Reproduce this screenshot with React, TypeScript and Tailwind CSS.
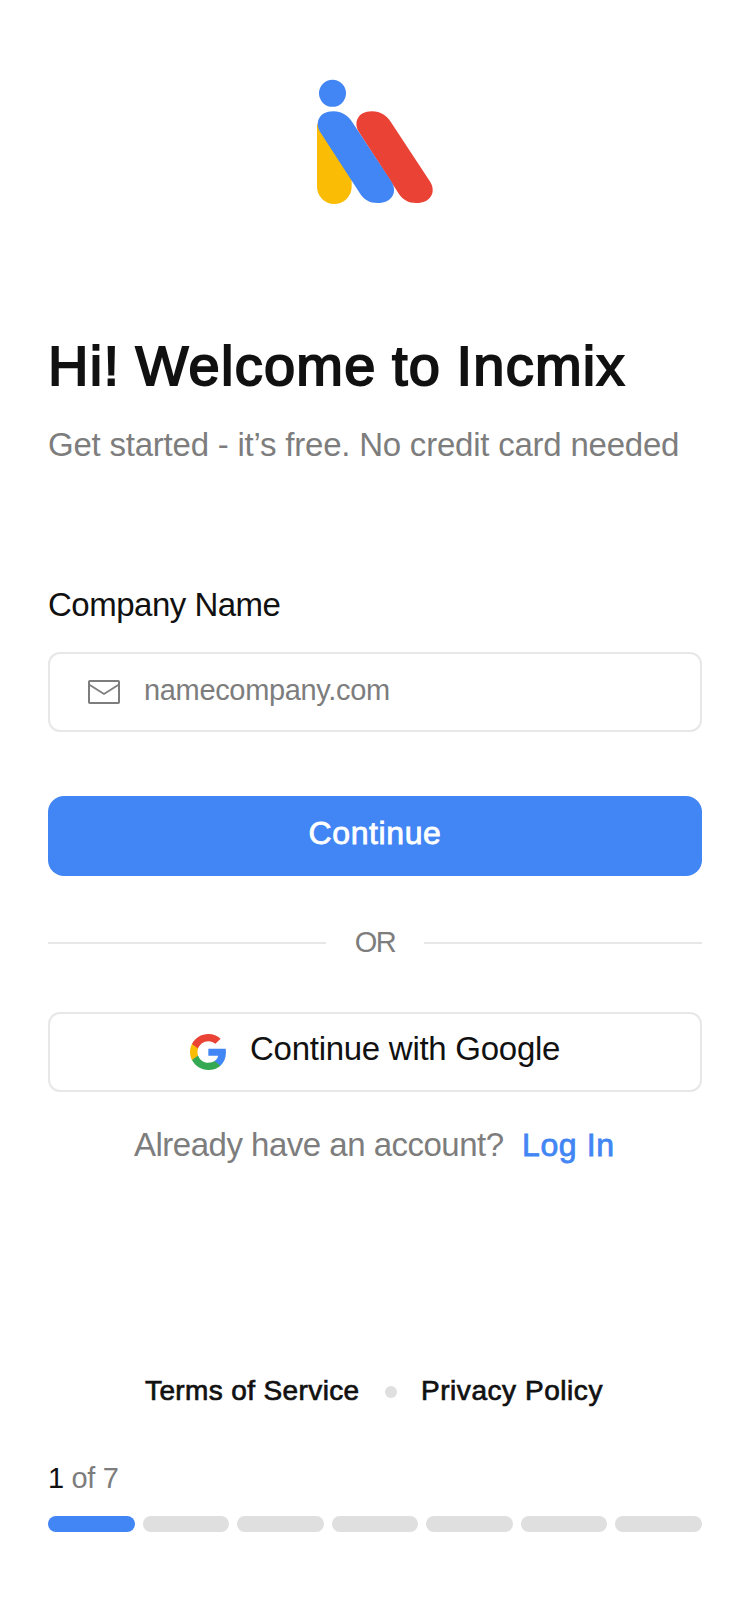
import React from "react";

const STEPS = 7;
const CURRENT_STEP = 1;

function Logo() {
  return (
    <svg className="block h-[150px] w-[150px]" viewBox="0 0 450 450" aria-hidden="true">
      <path d="M51 160V350a52 52 0 0 0 104 0V300Z" fill="#FBBC05" />
      <path
        d="M177 187C160 160 171 124 216 124C242 124 260 137 272 155L391 336C409 367 392 399 349 399C324 399 308 389 297 372Z"
        fill="#EA4335"
      />
      <path
        d="M61 187C44 160 55 124 100 124C126 124 144 137 156 155L275 336C293 367 276 399 233 399C208 399 192 389 181 372Z"
        fill="#4285F4"
      />
      <circle cx="97.5" cy="70" r="40.5" fill="#4285F4" />
    </svg>
  );
}

function MailIcon() {
  return (
    <svg className="h-6 w-8 shrink-0" viewBox="0 0 32 24" fill="none" stroke="#7d7d7d" strokeWidth="2" aria-hidden="true">
      <rect x="1" y="1" width="30" height="22" rx="0.8" />
      <path d="M1 4.6L16 14L31 4.6" strokeWidth="1.8" />
    </svg>
  );
}

function GoogleIcon() {
  return (
    <svg className="h-9 w-9 shrink-0" viewBox="1 1 21.6 22" preserveAspectRatio="none" aria-hidden="true">
      <path fill="#4285F4" d="M22.56 12.25c0-.78-.07-1.53-.2-2.25H12v4.26h5.92c-.26 1.37-1.04 2.53-2.21 3.31v2.77h3.57c2.08-1.92 3.28-4.74 3.28-8.09z" />
      <path fill="#34A853" d="M12 23c2.97 0 5.46-.98 7.28-2.66l-3.57-2.77c-.98.66-2.23 1.06-3.71 1.06-2.86 0-5.29-1.93-6.16-4.53H2.18v2.84C3.99 20.53 7.7 23 12 23z" />
      <path fill="#FBBC05" d="M5.84 14.09c-.22-.66-.35-1.36-.35-2.09s.13-1.43.35-2.09V7.07H2.18C1.43 8.55 1 10.22 1 12s.43 3.45 1.18 4.93l3.66-2.84z" />
      <path fill="#EA4335" d="M12 5.38c1.62 0 3.06.56 4.21 1.64l3.15-3.15C17.45 2.09 14.97 1 12 1 7.7 1 3.99 3.47 2.18 7.07l3.66 2.84c.87-2.6 3.3-4.53 6.16-4.53z" />
    </svg>
  );
}

export default function App() {
  return (
    <main className="flex h-[1612px] w-[750px] flex-col bg-white px-12 pt-[70px] font-['Liberation_Sans',Arial,sans-serif] whitespace-nowrap text-[#111]">
      <div className="ml-[252px] h-[264px]">
        <Logo />
      </div>

      <h1 className="h-[64px] text-[56px] leading-[64px] tracking-[1.25px] [word-spacing:-1.5px] [-webkit-text-stroke:1.9px_#111]">Hi! Welcome to Incmix</h1>
      <p className="mt-[27px] h-10 text-[33px] leading-10 tracking-[-0.22px] text-[#7d7d7d]">Get started - it’s free. No credit card needed</p>

      <label className="mt-[120px] block h-10 text-[33px] leading-10 tracking-[-0.5px]">Company Name</label>
      <div className="mt-[27px] flex h-20 items-center rounded-xl border-2 border-[#e7e7e7] pl-[38px]">
        <MailIcon />
        <span className="ml-6 pb-1 text-[29px] leading-8 tracking-[-0.34px] text-[#7d7d7d]">namecompany.com</span>
      </div>

      <button className="mt-16 flex h-20 items-center justify-center rounded-2xl bg-[#4285f4] pb-1.5 text-[32px] leading-10 tracking-[0.6px] text-white [-webkit-text-stroke:0.8px_white]">
        Continue
      </button>

      <div className="mt-[51px] flex h-8 items-center">
        <div className="h-0.5 w-[278px] bg-[#e7e7e7]" />
        <span className="flex-1 pb-0.5 text-center text-[29px] leading-8 tracking-[-1.6px] text-[#7d7d7d]">OR</span>
        <div className="h-0.5 w-[278px] bg-[#e7e7e7]" />
      </div>

      <button className="mt-[53px] flex h-20 items-center rounded-xl border-2 border-[#e7e7e7] pl-[140px]">
        <GoogleIcon />
        <span className="ml-6 pb-1.5 text-[33px] leading-10 tracking-[-0.27px]">Continue with Google</span>
      </button>

      <div className="mt-[33px] flex h-10 pl-[86px] text-[33px] leading-10">
        <span className="w-[388px] tracking-[-0.5px] text-[#7d7d7d]">Already have an account?</span>
        <a className="text-[32px] tracking-[0.6px] text-[#4285f4] [-webkit-text-stroke:0.8px_#4285f4]">Log In</a>
      </div>

      <nav className="mt-[210px] flex h-8 items-center pl-[97px] text-[28px] leading-8 [-webkit-text-stroke:0.7px_#111]">
        <a className="w-[240px] tracking-[0.38px]">Terms of Service</a>
        <span className="mt-[2px] h-3 w-3 rounded-full bg-[#dfdfdf]" />
        <a className="ml-6 tracking-[0.55px]">Privacy Policy</a>
      </nav>

      <div className="mt-[55px] h-8 text-[29px] leading-8 tracking-[-0.35px] text-[#7d7d7d]">
        <span className="text-[#111]">{CURRENT_STEP}</span> of {STEPS}
      </div>
      <div className="mt-[22px] flex gap-2">
        {Array.from({ length: STEPS }, (_, i) => (
          <div key={i} className={i < CURRENT_STEP ? "h-4 flex-1 rounded-full bg-[#4285f4]" : "h-4 flex-1 rounded-full bg-[#dfdfdf]"} />
        ))}
      </div>
    </main>
  );
}
